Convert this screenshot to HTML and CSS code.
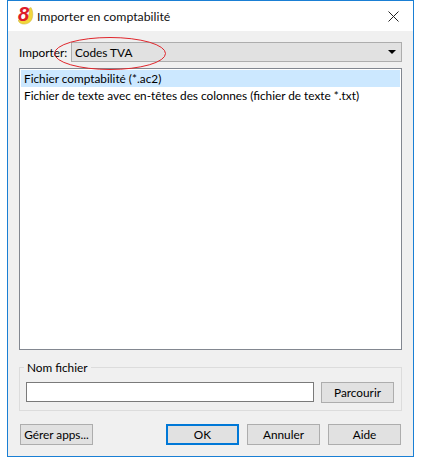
FILE: index.html
```html
<!DOCTYPE html>
<html lang="fr">
<head>
  <meta name="viewport" content="width=device-width, initial-scale=1.0">
  <title>Importer en comptabilité</title>
  <link rel="stylesheet" href="styles.css">
</head>
<body>

  <div class="window">
    <div class="titlebar">
      <span class="logo">
        <svg class="banana" width="17" height="19" viewBox="0 0 17 19">
          <path d="M0 13c4 1.500 8.500 0 10.500-4.500C11.500 6 11.500 3 11 1.500L13 .5c2 3.500 2.500 8.500.5 12.500C11 17.500 4 18.500 1 15z" fill="#f2d63c" stroke="#c9b23a" stroke-width=".5"/>
        </svg>
        <span class="logo-eight">8</span>
      </span>
      <span class="title">Importer en comptabilité</span>
      <svg class="close" width="11" height="11" viewBox="0 0 11 11">
        <path d="M.5.5l10 10M10.500.5l-10 10" stroke="#222" stroke-width="1" fill="none"/>
      </svg>
    </div>

    <div class="content">
      <div class="import-row">
        <span class="import-label">Importer:</span>
        <div class="combo">
          <span>Codes TVA</span>
          <span class="arrow"></span>
        </div>
      </div>

      <div class="list">
        <div class="list-item selected">Fichier comptabilité (*.ac2)</div>
        <div class="list-item">Fichier de texte avec en-têtes des colonnes (fichier de texte *.txt)</div>
      </div>

      <div class="group">
        <span class="legend">Nom fichier</span>
        <div class="file-row">
          <div class="file-input"></div>
          <button class="button">Parcourir</button>
        </div>
      </div>

      <div class="btn-container">
        <button class="button">Gérer apps...</button>
        <div class="btn-right">
          <button class="button default">OK</button>
          <button class="button">Annuler</button>
          <button class="button">Aide</button>
        </div>
      </div>
    </div>
  </div>

  <!-- red circle drawn on top of the screenshot -->
  <svg class="annotation" width="116" height="37" viewBox="0 0 116 37">
    <ellipse cx="58" cy="18.500" rx="55.500" ry="16" fill="none" stroke="#e0262c" stroke-width="1"/>
  </svg>

</body>
</html>
```

FILE: styles.css
```css
body {
  font-family: "Lato", "Open Sans", sans-serif;
  font-size: 11.800px;
  color: #000;
  background-color: #fff;
  margin: 0;
  height: 464px;
  overflow: hidden;
  position: relative;
}
.window {
  margin-left: 7px;
  width: 407px;
  height: 457px;
  box-sizing: border-box;
  border: 1px solid #1a7fd4;
  display: flex;
  flex-direction: column;
}
.titlebar {
  height: 30px;
  background-color: #fff;
  display: flex;
  align-items: center;
  padding: 0 14px 0 9px;
  flex-shrink: 0;
}
.logo {
  width: 20px;
  height: 20px;
  position: relative;
}
.banana {
  position: absolute;
  left: 1px;
  top: 1px;
}
.logo-eight {
  position: absolute;
  left: 1px;
  top: -2px;
  font-family: "Liberation Sans", sans-serif;
  font-size: 20px;
  font-style: italic;
  font-weight: bold;
  line-height: 20px;
  color: #dd1c2a;
}
.title {
  flex: 1;
  font-size: 12.300px;
  color: #111;
}
.content {
  flex: 1;
  background-color: #f0f0f0;
  padding: 11px 11px 0 11px;
  display: flex;
  flex-direction: column;
}
.import-row {
  display: flex;
  align-items: center;
  height: 20px;
}
.import-label {
  width: 52px;
  flex-shrink: 0;
}
.combo {
  flex: 1;
  height: 20px;
  box-sizing: border-box;
  background-color: #e1e1e1;
  border: 1px solid #adadad;
  display: flex;
  align-items: center;
  justify-content: space-between;
  padding: 0 5px 0 3px;
}
.arrow {
  width: 0;
  height: 0;
  border-left: 4px solid transparent;
  border-right: 4px solid transparent;
  border-top: 4px solid #000;
}
.list {
  height: 282px;
  box-sizing: border-box;
  margin-top: 6px;
  background-color: #fff;
  border: 1px solid #828790;
  padding: 1px;
}
.list-item {
  height: 17px;
  line-height: 17px;
  padding-left: 3px;
  white-space: nowrap;
}
.selected {
  background-color: #cce8ff;
}
.group {
  height: 44px;
  box-sizing: border-box;
  margin-top: 17px;
  border: 1px solid #dcdcdc;
  padding: 14px 7px 0 6px;
  position: relative;
}
.legend {
  position: absolute;
  left: 4px;
  top: -8px;
  padding: 0 3px;
  line-height: 16px;
  background-color: #f0f0f0;
}
.file-row {
  display: flex;
  gap: 7px;
}
.file-input {
  width: 288px;
  height: 20px;
  box-sizing: border-box;
  background-color: #fff;
  border: 1px solid #7a7a7a;
}
.button {
  width: 73px;
  height: 21px;
  box-sizing: border-box;
  padding: 0;
  font-family: inherit;
  font-size: 11.800px;
  color: #000;
  background-color: #e1e1e1;
  border: 1px solid #adadad;
  white-space: nowrap;
}
.default {
  border: 2px solid #0078d7;
}
.btn-container {
  display: flex;
  justify-content: space-between;
  margin-top: 13px;
  padding: 0 1px;
}
.btn-right {
  display: flex;
  gap: 8px;
}
.annotation {
  position: absolute;
  left: 52px;
  top: 35px;
}
```
